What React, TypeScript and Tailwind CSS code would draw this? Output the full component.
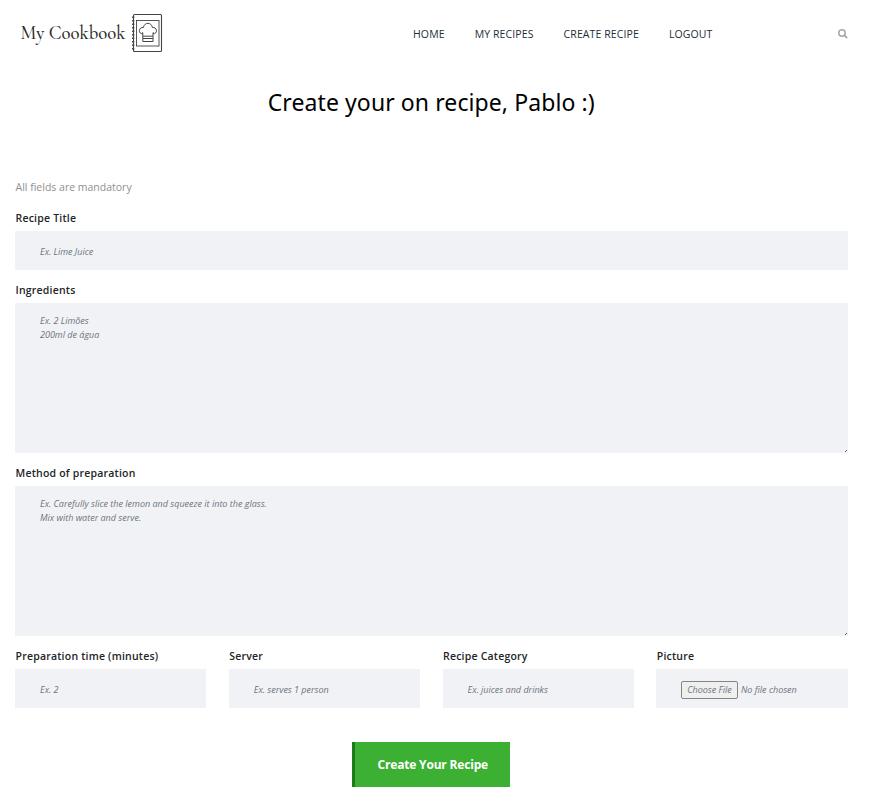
import React from "react";

const navItems = ["HOME", "MY RECIPES", "CREATE RECIPE", "LOGOUT"];

const inputClass =
  "block w-full h-[39px] bg-[#f1f2f6] px-[25px] pt-[2px] text-[9px] italic text-[#6c757d] placeholder:text-[#6c757d] placeholder:opacity-100 outline-none";

function Logo() {
  return (
    <a href="#" className="flex items-center pb-[2px] text-[#2d2d2d]">
      <span className="w-[105px] whitespace-nowrap pl-[0.5px] font-['Cormorant_Garamond','Liberation_Serif',serif] text-[18.7px] font-medium leading-[24px]">
        My Cookbook
      </span>
      <svg className="ml-[6px]" width="32" height="40" viewBox="0 0 32 40" fill="none" stroke="#444" strokeWidth="0.9">
        <rect x="2.500" y="1.500" width="28" height="37" rx="1" strokeWidth="1.100" />
        <path d="M2.200 3.500v34" strokeWidth="2.200" strokeDasharray="1.600 1.900" />
        <rect x="5.500" y="7.500" width="22.500" height="25.500" />
        <path
          d="M11.800 28.500v-7.800c-2.200.4-3.700-1.300-3.400-3.300.2-2 1.900-3.200 4-2.900.5-2.700 2.400-4.200 4.500-4.200s4 1.500 4.500 4.200c2.100-.3 3.800.9 4 2.900.3 2-1.200 3.700-3.400 3.300v7.800zM12 25.500h9.800M12 23.200h9.800M11.800 20.700l-.3-1.500M22 20.700l.3-1.500"
          strokeWidth="1"
        />
      </svg>
    </a>
  );
}

function Label({ children }: { children: React.ReactNode }) {
  return (
    <span className="block h-[27px] whitespace-nowrap pl-[0.5px] pt-[6px] text-[10.5px] font-semibold leading-[16px] text-[#212529] tracking-[0.21px]">
      {children}
    </span>
  );
}

function TextBox({ label, placeholder }: { label: string; placeholder: string }) {
  return (
    <label className="block">
      <Label>{label}</Label>
      <div className="relative">
        <textarea
          placeholder={placeholder}
          className="block h-[150px] w-full resize-none bg-[#f1f2f6] px-[25px] pt-[11px] text-[9px] italic leading-[14px] outline-none placeholder:text-[#6c757d] placeholder:opacity-100"
        />
        <svg className="absolute bottom-px right-px" width="2" height="2" shapeRendering="crispEdges">
          <path d="M0 1h1v1H0zM1 0h1v1H1z" fill="#666" />
        </svg>
      </div>
    </label>
  );
}

export default function App() {
  return (
    <div className="h-[809px] overflow-hidden bg-white px-[15px] font-['Open_Sans','Noto_Sans',sans-serif]">
      <div className="w-[832.5px]">
        <header className="flex h-[67px] items-center">
          <div className="w-[398px] pl-[5px]">
            <Logo />
          </div>
          <nav className="flex gap-[30px] text-[10.5px] leading-[16px] tracking-[0.11px] text-[#232d37]">
            {navItems.map((item) => (
              <a key={item} href="#" className="whitespace-nowrap">
                {item}
              </a>
            ))}
          </nav>
          <svg className="ml-auto" width="10" height="10" viewBox="0 0 10 10" fill="none" stroke="#a8a8a8" strokeWidth="1.500">
            <circle cx="4" cy="4" r="3.200" />
            <path d="M6.400 6.400L9.200 9.200" strokeWidth="1.800" />
          </svg>
        </header>

        <h1 className="mt-[19px] text-center font-['Noto_Sans',sans-serif] text-[23px] leading-[32px] tracking-[0.09px] text-black">
          Create your on recipe, Pablo :)
        </h1>

        <form className="mt-[61px]">
          <p className="h-[25px] pl-[0.5px] text-[10.5px] leading-[16px] text-[#8f8f8f]">All fields are mandatory</p>
          <label className="block">
            <Label>Recipe Title</Label>
            <input className={inputClass} placeholder="Ex. Lime Juice" />
          </label>
          <div className="mt-[6px]">
            <TextBox label="Ingredients" placeholder={"Ex. 2 Limões\n200ml de água"} />
          </div>
          <div className="mt-[6px]">
            <TextBox
              label="Method of preparation"
              placeholder={"Ex. Carefully slice the lemon and squeeze it into the glass.\nMix with water and serve."}
            />
          </div>
          <div className="mt-[6px] grid grid-cols-4 gap-[22.5px]">
            <label>
              <Label>Preparation time (minutes)</Label>
              <input className={inputClass} placeholder="Ex. 2" />
            </label>
            <label>
              <Label>Server</Label>
              <input className={inputClass} placeholder="Ex. serves 1 person" />
            </label>
            <label>
              <Label>Recipe Category</Label>
              <input className={inputClass} placeholder="Ex. juices and drinks" />
            </label>
            <div>
              <Label>Picture</Label>
              <div className="flex h-[39px] items-center bg-[#f1f2f6] pl-[24.75px] pt-[2px] text-[9px] italic text-[#6c757d]">
                <button
                  type="button"
                  className="h-[18px] w-[57px] whitespace-nowrap rounded-[2px] border border-[#858585] bg-[#efefef] text-center italic leading-[16px]"
                >
                  Choose File
                </button>
                <span className="ml-[3px] whitespace-nowrap">No file chosen</span>
              </div>
            </div>
          </div>
          <div className="mt-[34px] flex justify-center">
            <button
              type="button"
              className="h-[45px] w-[158px] whitespace-nowrap border-l-[3px] border-[#1f7a1c] bg-[#3bb033] text-[12px] font-bold tracking-[-0.18px] text-white"
            >
              Create Your Recipe
            </button>
          </div>
        </form>
      </div>
    </div>
  );
}
